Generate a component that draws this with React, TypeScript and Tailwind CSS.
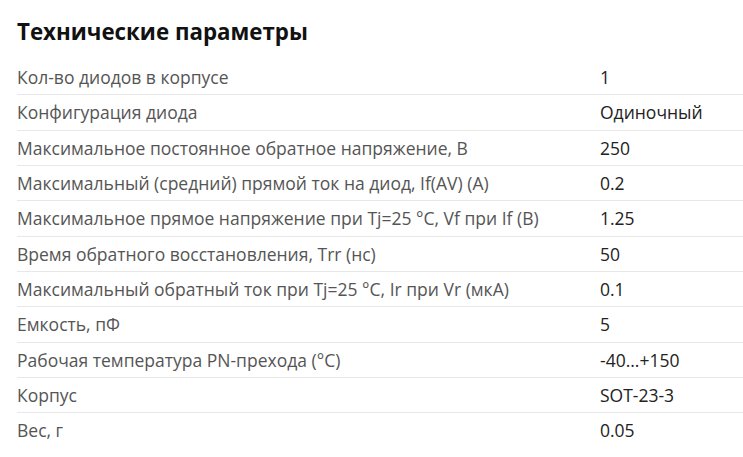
import React from "react";

const rows: [string, string][] = [
  ["Кол-во диодов в корпусе", "1"],
  ["Конфигурация диода", "Одиночный"],
  ["Максимальное постоянное обратное напряжение, В", "250"],
  ["Максимальный (средний) прямой ток на диод, If(AV) (A)", "0.2"],
  ["Максимальное прямое напряжение при Tj=25 °C, Vf при If (В)", "1.25"],
  ["Время обратного восстановления, Trr (нс)", "50"],
  ["Максимальный обратный ток при Tj=25 °C, Ir при Vr (мкА)", "0.1"],
  ["Емкость, пФ", "5"],
  ["Рабочая температура PN-прехода (°C)", "-40...+150"],
  ["Корпус", "SOT-23-3"],
  ["Вес, г", "0.05"],
];

export default function App() {
  return (
    <div
      className="w-[743px] h-[457px] bg-white overflow-hidden pl-[17px]"
      style={{ fontFamily: '"Open Sans", sans-serif' }}
    >
      <h2 className="h-[59px] pt-[17px] text-[22.3px] leading-[30px] font-bold text-[#111]">
        Технические параметры
      </h2>
      <div className="flex flex-col">
        {rows.map(([k, v], i) => (
          <div
            key={i}
            className={`flex items-center h-[35.33px] text-[17.5px] ${i > 0 ? "border-t border-[#e8e8e8]" : ""}`}
          >
            <div className="w-[583px] text-[#555]">{k}</div>
            <div className="text-[#222]">{v}</div>
          </div>
        ))}
      </div>
    </div>
  );
}
